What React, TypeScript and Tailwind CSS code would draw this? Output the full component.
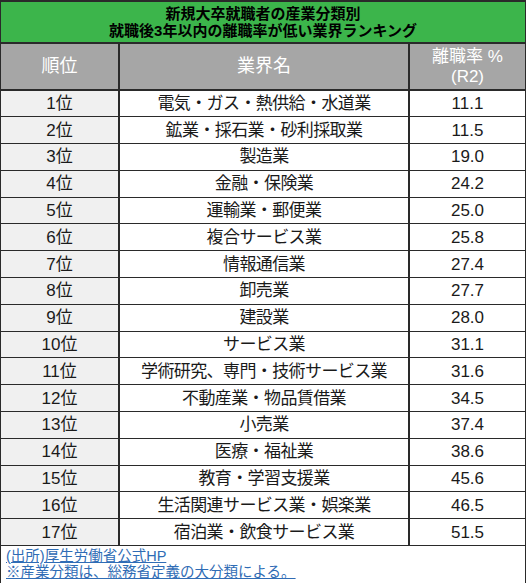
const rows: [string, string][] = [
  ['電気・ガス・熱供給・水道業', '11.1'],
  ['鉱業・採石業・砂利採取業', '11.5'],
  ['製造業', '19.0'],
  ['金融・保険業', '24.2'],
  ['運輸業・郵便業', '25.0'],
  ['複合サービス業', '25.8'],
  ['情報通信業', '27.4'],
  ['卸売業', '27.7'],
  ['建設業', '28.0'],
  ['サービス業', '31.1'],
  ['学術研究、専門・技術サービス業', '31.6'],
  ['不動産業・物品賃借業', '34.5'],
  ['小売業', '37.4'],
  ['医療・福祉業', '38.6'],
  ['教育・学習支援業', '45.6'],
  ['生活関連サービス業・娯楽業', '46.5'],
  ['宿泊業・飲食サービス業', '51.5'],
]

export default function App() {
  return (
    <div
      className="w-[526px] h-[583px] bg-white text-[#1a1a1a]"
      style={{ fontFamily: '"Liberation Sans", "Noto Sans CJK JP", sans-serif' }}
    >
      <div className="border-x border-t-2 border-[#2a2a2a]">
        {/* Title band */}
        <div className="h-[40px] bg-[#3cb54b] flex flex-col items-center justify-center text-[15px] font-bold leading-[17px] text-black">
          <p>新規大卒就職者の産業分類別</p>
          <p>就職後3年以内の離職率が低い業界ランキング</p>
        </div>

        <table className="w-full table-fixed border-collapse">
          <colgroup>
            <col className="w-[118px]" />
            <col className="w-[290px]" />
            <col />
          </colgroup>
          <thead>
            <tr className="h-[47px] bg-[#a6a6a6] text-white">
              <th className="border-2 border-l-0 border-[#2a2a2a] text-[18px] font-normal">順位</th>
              <th className="border-2 border-[#2a2a2a] text-[18px] font-normal">業界名</th>
              <th className="border-2 border-r-0 border-[#2a2a2a] text-[17px] font-normal leading-[20px]">
                離職率 %
                <br />
                (R2)
              </th>
            </tr>
          </thead>
          <tbody>
            {rows.map(([name, rate], i) => (
              <tr key={name} className="h-[26.8px] text-[17px] leading-none">
                <td className="border-[1.5px] border-l-0 border-[#2a2a2a] bg-[#f0f0f0] text-center">
                  {i + 1}位
                </td>
                <td className="border-[1.5px] border-x-2 border-[#2a2a2a] text-center tracking-[-0.6px]">
                  {name}
                </td>
                <td className="border-[1.5px] border-r-0 border-[#2a2a2a] text-center">{rate}</td>
              </tr>
            ))}
          </tbody>
        </table>
      </div>

      {/* Footer notes */}
      <div className="h-[39px] border-x border-b-2 border-[#2a2a2a] px-[5px] pt-[2px] text-[14.5px] leading-[16px] text-[#2f6cb5] underline">
        <p>(出所)厚生労働省公式HP</p>
        <p>※産業分類は、総務省定義の大分類による。</p>
      </div>
    </div>
  )
}
